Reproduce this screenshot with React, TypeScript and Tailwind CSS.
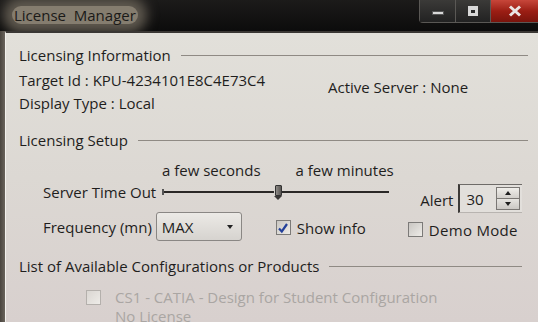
import React from "react";

const font = { fontFamily: '"Open Sans", "Noto Sans", sans-serif' };

function SectionHeader({ title, lineRight = "mr-[10px]" }: { title: string; lineRight?: string }) {
  return (
    <div className="flex h-[20px] items-center">
      <span className="whitespace-nowrap">{title}</span>
      <div className={`ml-[10px] h-px flex-1 bg-[#8f8a84] ${lineRight}`} />
    </div>
  );
}

function CheckBox({ checked = false, disabled = false }: { checked?: boolean; disabled?: boolean }) {
  return (
    <div
      className={`flex h-[15px] w-[15px] items-center justify-center border bg-gradient-to-br from-[#c9c6c2] to-[#eeece8] ${
        disabled ? "border-[#b4b0ac] from-[#dad6d2] to-[#e4e0dc]" : "border-[#7c7a78]"
      }`}
    >
      {checked && (
        <svg viewBox="0 0 12 12" className="h-[12px] w-[12px]">
          <path d="M2 6.5 L4.8 9.5 L10 2" fill="none" stroke="#23409a" strokeWidth="2.2" />
        </svg>
      )}
    </div>
  );
}

function TitleBar() {
  return (
    <div className="flex h-[31px] bg-gradient-to-b from-[#1c1b1a] to-[#0c0c0c]">
      <div className="flex h-[27px] items-end pb-[3px] pl-[12px]">
        <span className="rounded-[10px] bg-[#857d6f] px-[2px] text-[15px] leading-[18px] text-[#1b1a18] shadow-[0_0_12px_9px_#5f594f]">
          License&nbsp; Manager
        </span>
      </div>
      <div className="flex-1" />
      <div className="flex h-[23px] items-stretch rounded-bl-[4px] border-b border-l border-[#5a5855]">
        <div className="flex w-[36px] items-center justify-center border-r border-[#5a5855] bg-gradient-to-b from-[#3b3a38] to-[#222]">
          <div className="mt-[4px] h-[4px] w-[12px] border border-[#555] bg-[#d8d8d8]" />
        </div>
        <div className="flex w-[35px] items-center justify-center border-r border-[#5a5855] bg-gradient-to-b from-[#3b3a38] to-[#222]">
          <div className="h-[10px] w-[10px] border-[3px] border-t-[4px] border-[#d8d8d8] bg-[#2a2a2a]" />
        </div>
        <div className="flex w-[47px] items-center justify-center bg-gradient-to-b from-[#c7463a] via-[#9c1e14] to-[#7a140c]">
          <svg viewBox="0 0 14 12" className="h-[12px] w-[14px]">
            <path d="M2 1.5 L12 10.5 M12 1.5 L2 10.5" stroke="#eae4e2" strokeWidth="3" />
          </svg>
        </div>
      </div>
    </div>
  );
}

export default function App() {
  return (
    <div
      className="h-[322px] w-[538px] overflow-hidden bg-[#121212] text-[15px] leading-[20px] text-[#1f1e1d]"
      style={font}
    >
      <TitleBar />
      <div className="flex h-[291px]">
        {/* left frame */}
        <div className="w-[5px] bg-gradient-to-r from-[#4a453f] to-[#6a645c]" />
        <div className="flex flex-1 flex-col border-l border-t-2 border-l-[#f2f0ec] border-t-[#3a3734] bg-gradient-to-b from-[#e2e0da] via-[#dcd8d3] to-[#d8d0ce] pl-[13px] pt-[12px]">
          <SectionHeader title="Licensing Information" />

          {/* target / display / active server */}
          <div className="mt-[3px] flex">
            <div className="flex w-[309px] flex-col">
              <div className="flex h-[23px] items-center">Target Id : KPU-4234101E8C4E73C4</div>
              <div className="flex h-[23px] items-center">Display Type : Local</div>
            </div>
            <div className="mt-[7px] flex h-[23px] items-center">Active Server : None</div>
          </div>

          <div className="mt-[16px]">
            <SectionHeader title="Licensing Setup" />
          </div>

          {/* slider labels */}
          <div className="mt-[10px] flex h-[20px] items-center">
            <span className="ml-[143px]">a few seconds</span>
            <span className="ml-[35px]">a few minutes</span>
          </div>

          {/* server time out row */}
          <div className="mt-[3px] flex h-[29px] items-start">
            <div className="ml-[24px] flex h-[18px] items-center">
              <span>Server Time Out</span>
              <div className="ml-[6px] flex w-[227px] items-center">
                <div className="h-[6px] w-[2px] bg-[#555]" />
                <div className="h-[2px] w-[110px] bg-[#2a2826]" />
                <div className="flex h-[15px] w-[8px] flex-col items-center">
                  <div className="h-[11px] w-[7px] rounded-t-[1px] border border-[#333] bg-gradient-to-r from-[#8d8a86] to-[#5a5754]" />
                  <div className="h-0 w-0 border-l-[4px] border-r-[4px] border-t-[4px] border-l-transparent border-r-transparent border-t-[#3a3836]" />
                </div>
                <div className="h-[2px] flex-1 bg-[#2a2826]" />
              </div>
            </div>
            <span className="ml-[31px] mt-[7px]">Alert</span>
            <div className="ml-[5px] mt-[1px] flex h-[29px] w-[64px] border-l-2 border-t border-b border-l-[#3c3a38] border-t-[#6e6b68] border-b-[#b8b4b0] bg-[#e2dfdb]">
              <span className="flex flex-1 items-center pl-[6px]">30</span>
              <div className="my-[2px] mr-[2px] flex w-[24px] flex-col border border-[#7a7774]">
                <div className="flex flex-1 items-center justify-center border-b border-[#7a7774] bg-gradient-to-b from-[#f0eeea] to-[#d2cfcb]">
                  <div className="h-0 w-0 border-b-[4px] border-l-[3px] border-r-[3px] border-b-[#1e1e1e] border-l-transparent border-r-transparent" />
                </div>
                <div className="flex flex-1 items-center justify-center bg-gradient-to-b from-[#e6e4e0] to-[#cbc8c4]">
                  <div className="h-0 w-0 border-l-[3px] border-r-[3px] border-t-[4px] border-l-transparent border-r-transparent border-t-[#1e1e1e]" />
                </div>
              </div>
            </div>
          </div>

          {/* frequency row */}
          <div className="flex h-[29px] items-center">
            <span className="ml-[24px]">Frequency (mn)</span>
            <div className="ml-[4px] flex h-[29px] w-[86px] items-center rounded-[3px] border border-[#8a8784] bg-gradient-to-b from-[#eceae6] to-[#d6d3cf] pl-[5px] pr-[8px]">
              <span className="flex-1">MAX</span>
              <div className="h-0 w-0 border-l-[3.5px] border-r-[3.5px] border-t-[4px] border-l-transparent border-r-transparent border-t-[#222]" />
            </div>
            <div className="ml-[34px] mt-[2px] flex items-center gap-[6px]">
              <CheckBox checked />
              <span>Show info</span>
            </div>
            <div className="ml-[42px] mt-[6px] flex items-center gap-[6px]">
              <CheckBox />
              <span className="tracking-[0.3px]">Demo Mode</span>
            </div>
          </div>

          <div className="mt-[15px]">
            <SectionHeader title="List of Available Configurations or Products" lineRight="mr-[16px]" />
          </div>

          <div className="ml-[67px] mt-[11px] flex h-[20px] items-center gap-[14px] text-[#aaa6a3]">
            <CheckBox disabled />
            <span>CS1 - CATIA - Design for Student Configuration</span>
          </div>
          <div className="ml-[96px] flex h-[18px] items-center text-[#aaa6a3]">No License</div>
        </div>
      </div>
    </div>
  );
}
